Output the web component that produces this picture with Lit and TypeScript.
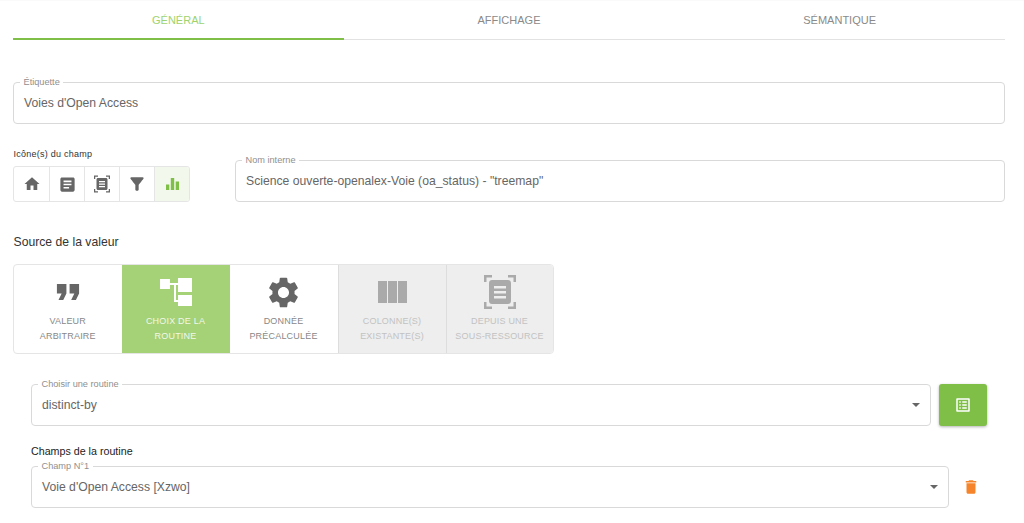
import { LitElement, html, css, svg } from "lit";
import { customElement } from "lit/decorators.js";

const I = (d: any, w: number, vb = "0 0 24 24", h: number = w) => html`<svg width=${w} height=${h} viewBox=${vb} fill="currentColor">${d}</svg>`;
const home = svg`<path d="M10 20v-6h4v6h5v-8h3L12 3 2 12h3v8z"/>`;
const article = svg`<path d="M19 3H5c-1.100 0-2 .9-2 2v14c0 1.100.9 2 2 2h14c1.100 0 2-.9 2-2V5c0-1.100-.9-2-2-2zm-5 14H7v-2h7v2zm3-4H7v-2h10v2zm0-4H7V7h10v2z"/>`;
const sub = svg`<path d="M0 0h8v2.500H2.500V7H0zM24 0h8v7h-2.500V2.500H24zM0 27h2.500v4.500H8V34H0zM29.500 27H32v7h-8v-2.500h5.500z"/><path fill-rule="evenodd" d="M8 5h16c1.700 0 3 1.300 3 3v18c0 1.700-1.300 3-3 3H8c-1.700 0-3-1.300-3-3V8c0-1.700 1.300-3 3-3zm2 6v2.500h12V11zm0 5v2.500h12V16zm0 5v2.500h12V21z"/>`;
const filter = svg`<path d="M4.250 5.610C6.270 8.200 10 13 10 13v6c0 .55.45 1 1 1h2c.55 0 1-.45 1-1v-6s3.720-4.800 5.740-7.390c.51-.66.04-1.610-.79-1.610H5.040c-.83 0-1.300.95-.79 1.610z"/>`;
const bars = svg`<path d="M0 6.500h3.300V12H0zM4.800 0h3.400v12H4.800zM9.700 3.500H13V12H9.700z"/>`;
const quote = svg`<path d="M6 17h3l2-4V7H5v6h3zm8 0h3l2-4V7h-6v6h3z"/>`;
const tree = svg`<path d="M0 1h10v10H0zM18 0h14v14H18zM18 17h14v11H18zM10 5h8v2h-2v15h2v2h-4V7h-4z"/>`;
const gear = svg`<path d="M19.140 12.940c.04-.3.060-.61.060-.94 0-.32-.02-.64-.07-.94l2.030-1.580c.18-.14.230-.41.120-.61l-1.920-3.320c-.12-.22-.37-.29-.59-.22l-2.390.96c-.5-.38-1.030-.7-1.620-.94l-.36-2.540c-.04-.24-.24-.41-.48-.41h-3.840c-.24 0-.43.17-.47.41l-.36 2.540c-.59.24-1.130.57-1.620.94l-2.390-.96c-.22-.08-.47 0-.59.22L2.740 8.870c-.12.21-.08.47.12.61l2.030 1.580c-.05.3-.09.63-.09.94s.02.64.07.94l-2.030 1.580c-.18.14-.23.41-.12.61l1.920 3.320c.12.22.37.29.59.22l2.390-.96c.5.38 1.030.7 1.620.94l.36 2.540c.05.24.24.41.48.41h3.840c.24 0 .44-.17.47-.41l.36-2.540c.59-.24 1.130-.56 1.620-.94l2.390.96c.22.08.47 0 .59-.22l1.920-3.320c.12-.22.07-.47-.12-.61l-2.010-1.580zM12 15.600c-1.980 0-3.600-1.620-3.600-3.600s1.620-3.600 3.600-3.600 3.600 1.620 3.600 3.600-1.620 3.600-3.600 3.600z"/>`;
const cols = svg`<path d="M0 0h9v22H0zM10 0h9v22h-9zM20 0h9v22h-9z"/>`;
const listAlt = svg`<path d="M19 5v14H5V5h14m1.100-2H3.900c-.5 0-.9.4-.9.9v16.200c0 .4.4.9.9.9h16.200c.4 0 .9-.5.9-.9V3.900c0-.5-.5-.9-.9-.9zM11 7h6v2h-6V7zm0 4h6v2h-6v-2zm0 4h6v2h-6zM7 7h2v2H7zm0 4h2v2H7zm0 4h2v2H7z"/>`;
const trash = svg`<path d="M6 19c0 1.100.9 2 2 2h8c1.100 0 2-.9 2-2V7H6v12zM19 4h-3.500l-1-1h-5l-1 1H5v2h14V4z"/>`;

@customElement("app-root")
export class AppRoot extends LitElement {
  static styles = css`
    :host { display: block; height: 523px; overflow: hidden; background: #fff; font-family: "Liberation Sans", Arial, sans-serif; color: #333; box-shadow: inset 0 1px 0 #fafafa; }
    .page { padding: 0 19px 0 13px; }
    .tabs { display: grid; grid-template-columns: repeat(3, 1fr); height: 40px; border-bottom: 1px solid #e2e2e2; box-sizing: border-box; width: 992px; }
    .tab { display: flex; align-items: center; justify-content: center; font-size: 11px; color: #8a8a8a; box-sizing: border-box; height: 40px; }
    .tab.on { color: #9ed36e; box-shadow: inset 0 -2px 0 #7fbe47; }
    fieldset { margin: 0; min-width: 0; height: 47px; box-sizing: border-box; border: 1px solid #d9d9d9; border-radius: 4px; padding: 0 10px; display: flex; align-items: center; background: #fff; }
    legend { font-size: 9.200px; line-height: 10px; height: 10px; color: #8f8f8f; padding: 0 3.500px; margin-left: -4px; }
    .val { flex: 1; font-size: 12.200px; color: #666; padding-bottom: 5px; }
    .arrow { width: 0; height: 0; border: 4px solid transparent; border-top: 4px solid #666; border-bottom: 0; margin: 0 .5px 4px 0; }
    .f1 { margin-top: 37px; }
    .row2 { display: flex; align-items: flex-end; margin-top: 25px; height: 53px; }
    .iconcol { width: 222px; flex: none; box-sizing: border-box; }
    .lbl { font-size: 9px; line-height: 10px; letter-spacing: .25px; color: #333; padding-left: .5px; }
    .igrp { display: flex; width: 177px; margin-top: 7px; border: 1px solid #e5e5e5; border-radius: 3px; height: 36px; box-sizing: border-box; overflow: hidden; }
    .igrp div { width: 35px; display: flex; align-items: center; justify-content: center; color: #666; box-sizing: border-box; }
    .igrp div + div { border-left: 1px solid #e5e5e5; }
    .igrp div:last-child { color: #7fbe47; background: #f2f8ec; }
    .nom { flex: 1; }
    .src { font-size: 12.200px; line-height: 14px; margin-top: 33px; color: #333; padding-left: .5px; }
    .btns { display: inline-flex; margin-top: 15px; border: 1px solid #e5e5e5; border-radius: 4px; height: 90px; box-sizing: border-box; overflow: hidden; vertical-align: top; }
    .b { width: 108px; box-sizing: border-box; display: flex; flex-direction: column; align-items: center; color: #666; font-size: 9px; line-height: 15px; letter-spacing: .2px; text-align: center; }
    .b:first-child { width: 107.500px; }
    .b:last-child { width: 107px; }
    .b .ic { height: 49px; display: flex; align-items: center; justify-content: center; padding-top: 5px; box-sizing: border-box; }
    .b .t { color: #888; }
    .b.on { background: #a5d177; color: #fff; }
    .b.on .t { color: #f1f8ea; }
    .b.dis { background: #eee; color: #aaa; border-left: 1px solid #ddd; }
    .b.dis .t { color: #c2c2c2; }
    .sec { padding-left: 18px; }
    .r { display: flex; align-items: flex-end; }
    .r fieldset { flex: 1; }
    .r1 { margin-top: 25px; width: 956px; gap: 8px; }
    .go { width: 48px; height: 42px; flex: none; background: #7fbe47; border-radius: 3px; color: #fff; display: flex; align-items: center; justify-content: center; box-shadow: 0 1px 3px rgba(0,0,0,.3); }
    .cl { font-size: 10.700px; line-height: 12px; color: #222; margin-top: 19px; }
    .r2 { margin-top: 4px; width: 974px; }
    .del { flex: none; width: 56px; height: 42px; box-sizing: border-box; padding-right: 12px; display: flex; align-items: center; justify-content: center; color: #f5842a; }
  `;

  render() {
    return html`<div class="page">
      <div class="tabs"><div class="tab on">GÉNÉRAL</div><div class="tab">AFFICHAGE</div><div class="tab">SÉMANTIQUE</div></div>
      <fieldset class="f1"><legend>Étiquette</legend><span class="val">Voies d'Open Access</span></fieldset>
      <div class="row2">
        <div class="iconcol"><div class="lbl">Icône(s) du champ</div>
          <div class="igrp">
            <div>${I(home, 18)}</div><div>${I(article, 19)}</div><div>${I(sub, 16, "0 0 32 34", 18)}</div><div>${I(filter, 20)}</div><div>${I(bars, 13, "0 0 13 12", 12)}</div>
          </div>
        </div>
        <fieldset class="nom"><legend>Nom interne</legend><span class="val">Science ouverte-openalex-Voie (oa_status) - "treemap"</span></fieldset>
      </div>
      <div class="src">Source de la valeur</div>
      <div class="btns">
        <div class="b"><div class="ic">${I(quote, 38)}</div><div class="t">VALEUR<br />ARBITRAIRE</div></div>
        <div class="b on"><div class="ic">${I(tree, 32, "0 0 32 28", 28)}</div><div class="t">CHOIX DE LA<br />ROUTINE</div></div>
        <div class="b"><div class="ic">${I(gear, 37)}</div><div class="t">DONNÉE<br />PRÉCALCULÉE</div></div>
        <div class="b dis"><div class="ic">${I(cols, 29, "0 0 29 22", 22)}</div><div class="t">COLONNE(S)<br />EXISTANTE(S)</div></div>
        <div class="b dis"><div class="ic">${I(sub, 32, "0 0 32 34", 34)}</div><div class="t">DEPUIS UNE<br />SOUS-RESSOURCE</div></div>
      </div>
      <div class="sec">
        <div class="r r1">
          <fieldset><legend>Choisir une routine</legend><span class="val">distinct-by</span><span class="arrow"></span></fieldset>
          <div class="go">${I(listAlt, 18)}</div>
        </div>
        <div class="cl">Champs de la routine</div>
        <div class="r r2">
          <fieldset><legend>Champ N°1</legend><span class="val">Voie d'Open Access [Xzwo]</span><span class="arrow"></span></fieldset>
          <div class="del">${I(trash, 18)}</div>
        </div>
      </div>
    </div>`;
  }
}
